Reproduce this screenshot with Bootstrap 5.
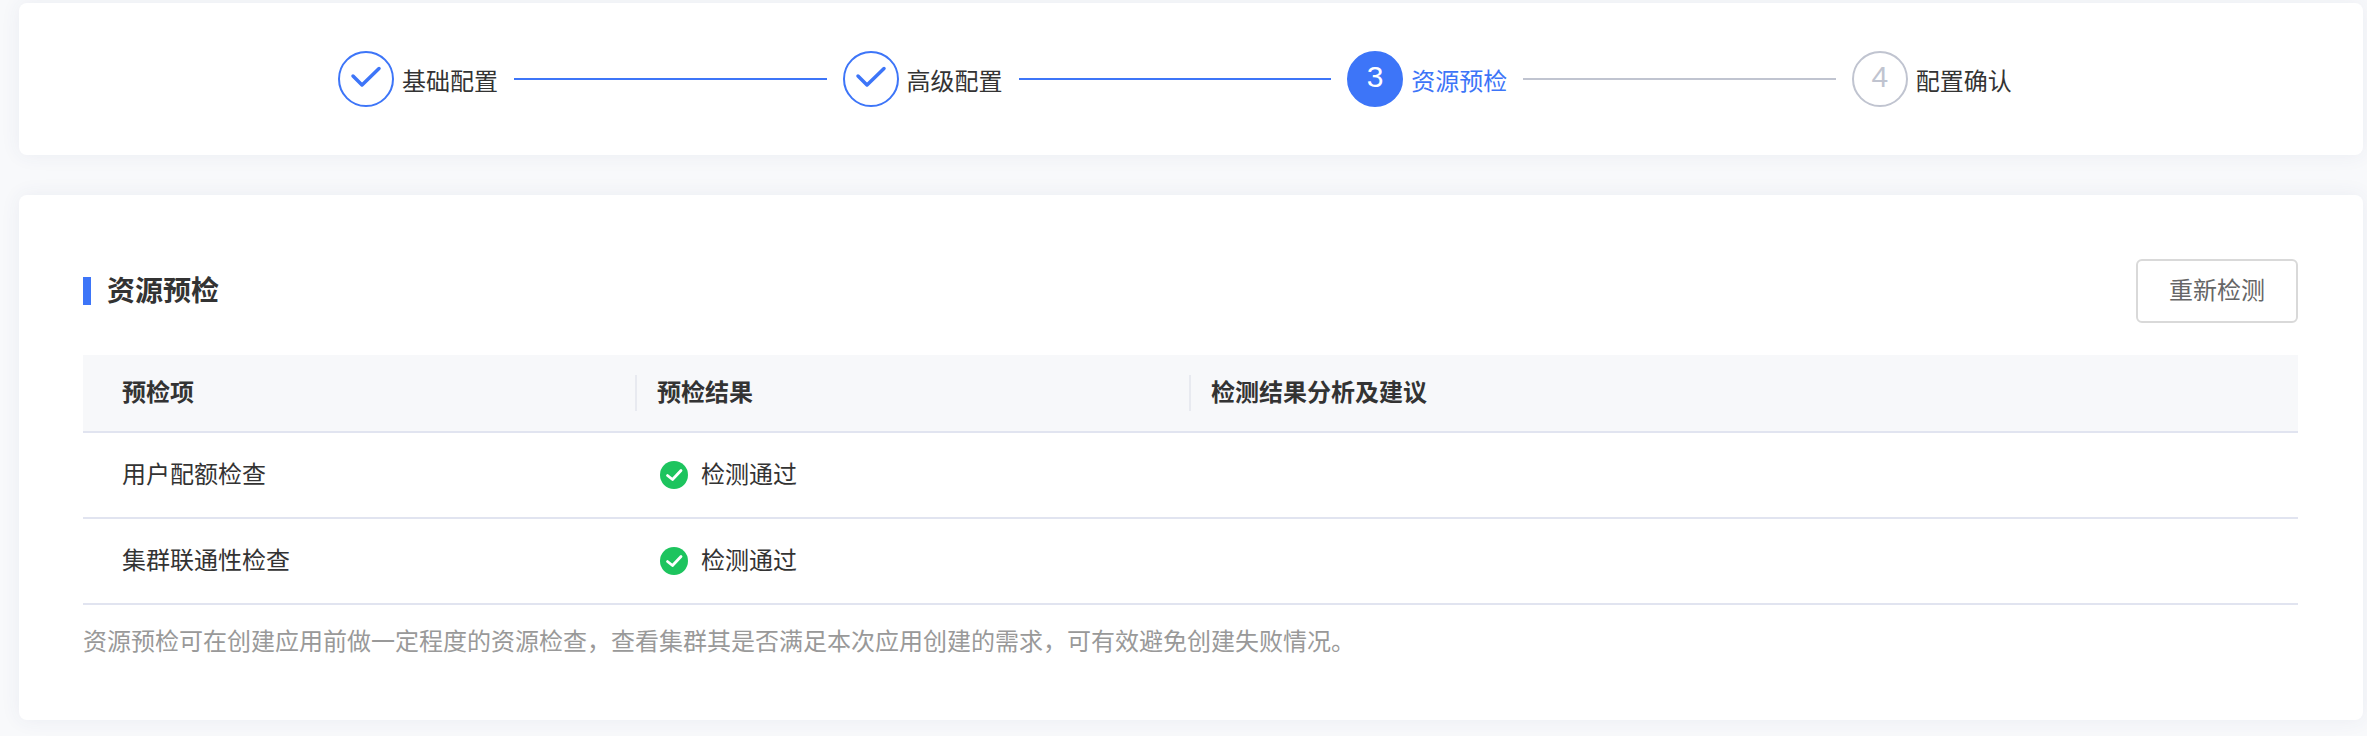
<!DOCTYPE html>
<html lang="zh-CN">
<head>
    <meta charset="UTF-8">
    <title>资源预检</title>
    <link href="https://cdn.jsdelivr.net/npm/bootstrap@5.3.0/dist/css/bootstrap.min.css" rel="stylesheet">
    <style>
        body { background: #f8f9fb; color: #333; font-family: "Liberation Sans", "Noto Sans CJK SC", sans-serif; font-size: 24px; }
        .page-wrap { padding: 3px 4px 16px 19px; }
        .panel { background: #fff; border-radius: 8px; box-shadow: 0 0 20px rgba(60, 70, 130, .07); }
        .steps-panel { height: 152px; margin-bottom: 40px; padding-left: 319px; }
        .step-circle { width: 56px; height: 56px; border: 2px solid #3d75f8; border-radius: 50%; color: #3d75f8; font-size: 30px; line-height: 1; padding-bottom: 5px; }
        .step-circle.done { padding-bottom: 0; }
        .step-circle.active { background: #3d75f8; color: #fff; }
        .step-circle.todo { border-color: #c0c4d0; color: #c0c4d0; }
        .step-label { margin: 5px 0 0 8px; line-height: 32px; white-space: nowrap; }
        .step-label.active { color: #3d75f8; }
        .step-line { width: 312.6px; height: 2px; margin: 0 16px; background: #3d75f8; }
        .step-line.todo { background: #c0c4d0; }
        .check-panel { height: 525px; padding: 64px 65px 0 64px; }
        .panel-title { height: 64px; }
        .title-text { border-left: 8px solid #3d75f8; padding-left: 16px; font-size: 28px; line-height: 28px; font-weight: 700; color: #333; }
        .title-text span { position: relative; top: 1px; }
        .btn.recheck { width: 162px; height: 64px; padding: 0; background: #fff; border: 2px solid #d9d9d9; border-radius: 6px; color: #666; font-size: 24px; }
        .check-table { margin: 32px 0 0; font-size: 24px; table-layout: fixed; color: #333; }
        .check-table th, .check-table td { padding: 0; border-bottom: 2px solid #e1e4f0; vertical-align: middle; box-shadow: none; }
        .check-table thead th { height: 77px; background: #f7f8fa; font-weight: 700; }
        .check-table tbody td { height: 86px; }
        .check-table .col-a { width: 552px; padding-left: 39px; }
        .check-table .col-b { width: 554px; padding-left: 22px; }
        .check-table th.col-b, .check-table th.col-c { position: relative; }
        .check-table th.col-b::before, .check-table th.col-c::before { content: ""; position: absolute; left: 0; top: 20px; height: 36px; width: 2px; background: #e8eaf0; }
        .check-table .col-c { padding-left: 22px; }
        .pass-icon { width: 28px; height: 28px; margin: 0 13px 0 3px; flex: none; }
        .tip-text { margin: 21px 0 0; color: #999; line-height: 32px; }
    </style>
</head>
<body>
<div class="page-wrap">
    <div class="panel steps-panel d-flex align-items-center">
        <div class="step-circle done d-flex align-items-center justify-content-center flex-shrink-0">
            <svg width="32" height="26" viewBox="0 0 32 26" fill="none"><path d="M3 10l9 9L29 2.500" stroke="#3d75f8" stroke-width="3.500" stroke-linecap="round" stroke-linejoin="round"/></svg>
        </div>
        <span class="step-label">基础配置</span>
        <div class="step-line flex-shrink-0"></div>
        <div class="step-circle done d-flex align-items-center justify-content-center flex-shrink-0">
            <svg width="32" height="26" viewBox="0 0 32 26" fill="none"><path d="M3 10l9 9L29 2.500" stroke="#3d75f8" stroke-width="3.500" stroke-linecap="round" stroke-linejoin="round"/></svg>
        </div>
        <span class="step-label">高级配置</span>
        <div class="step-line flex-shrink-0"></div>
        <div class="step-circle active d-flex align-items-center justify-content-center flex-shrink-0">3</div>
        <span class="step-label active">资源预检</span>
        <div class="step-line todo flex-shrink-0"></div>
        <div class="step-circle todo d-flex align-items-center justify-content-center flex-shrink-0">4</div>
        <span class="step-label">配置确认</span>
    </div>

    <div class="panel check-panel">
        <div class="panel-title d-flex align-items-center justify-content-between">
            <div class="title-text"><span>资源预检</span></div>
            <button type="button" class="btn recheck">重新检测</button>
        </div>
        <table class="table check-table">
            <thead>
                <tr>
                    <th class="col-a">预检项</th>
                    <th class="col-b">预检结果</th>
                    <th class="col-c">检测结果分析及建议</th>
                </tr>
            </thead>
            <tbody>
                <tr>
                    <td class="col-a">用户配额检查</td>
                    <td class="col-b">
                        <div class="d-flex align-items-center">
                            <svg class="pass-icon" viewBox="0 0 28 28"><circle cx="14" cy="14" r="14" fill="#1dc45e"/><path d="M7.500 14.500l5 4L21 9.500" fill="none" stroke="#fff" stroke-width="2.800" stroke-linecap="round" stroke-linejoin="round"/></svg>
                            <span>检测通过</span>
                        </div>
                    </td>
                    <td class="col-c"></td>
                </tr>
                <tr>
                    <td class="col-a">集群联通性检查</td>
                    <td class="col-b">
                        <div class="d-flex align-items-center">
                            <svg class="pass-icon" viewBox="0 0 28 28"><circle cx="14" cy="14" r="14" fill="#1dc45e"/><path d="M7.500 14.500l5 4L21 9.500" fill="none" stroke="#fff" stroke-width="2.800" stroke-linecap="round" stroke-linejoin="round"/></svg>
                            <span>检测通过</span>
                        </div>
                    </td>
                    <td class="col-c"></td>
                </tr>
            </tbody>
        </table>
        <p class="tip-text">资源预检可在创建应用前做一定程度的资源检查，查看集群其是否满足本次应用创建的需求，可有效避免创建失败情况。</p>
    </div>
</div>
<script src="https://cdn.jsdelivr.net/npm/bootstrap@5.3.0/dist/js/bootstrap.bundle.min.js"></script>
</body>
</html>
